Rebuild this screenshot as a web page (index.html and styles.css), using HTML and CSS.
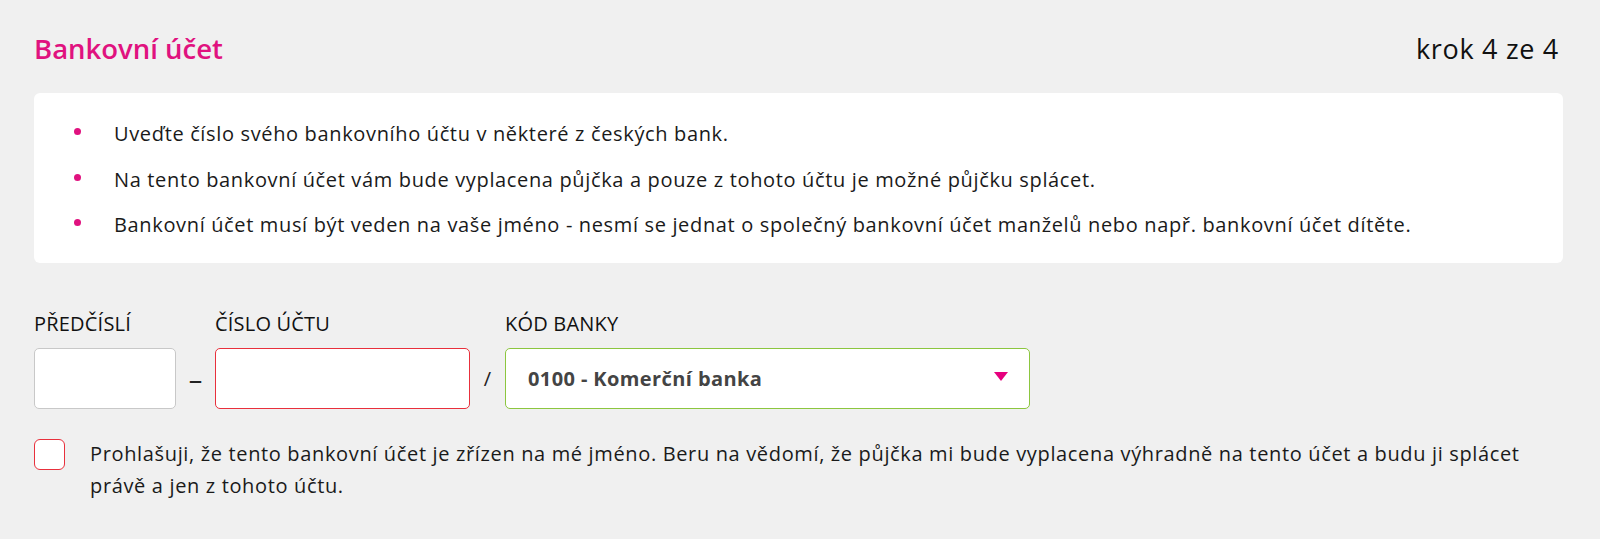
FILE: index.html
```html
<!DOCTYPE html>
<html lang="cs">
<head>
    <meta charset="UTF-8">
    <title>Bankovní účet</title>
    <link rel="stylesheet" href="styles.css">
</head>
<body>

<div class="container">
    <header class="step-header">
        <h1>Bankovní účet</h1>
        <span class="step">krok 4 ze 4</span>
    </header>

    <div class="info-box">
        <ul>
            <li>Uveďte číslo svého bankovního účtu v některé z českých bank.</li>
            <li>Na tento bankovní účet vám bude vyplacena půjčka a pouze z tohoto účtu je možné půjčku splácet.</li>
            <li>Bankovní účet musí být veden na vaše jméno - nesmí se jednat o společný bankovní účet manželů nebo např. bankovní účet dítěte.</li>
        </ul>
    </div>

    <div class="account-row">
        <div class="field">
            <label for="prefix">PŘEDČÍSLÍ</label>
            <input type="text" id="prefix" class="input input-prefix">
        </div>
        <span class="sep sep-dash">–</span>
        <div class="field">
            <label for="number">ČÍSLO ÚČTU</label>
            <input type="text" id="number" class="input input-number invalid">
        </div>
        <span class="sep sep-slash">/</span>
        <div class="field">
            <label for="bank">KÓD BANKY</label>
            <div class="select valid" id="bank">
                <span>0100 - Komerční banka</span>
                <span class="arrow"></span>
            </div>
        </div>
    </div>

    <label class="consent">
        <span class="checkbox"></span>
        <span class="consent-text">Prohlašuji, že tento bankovní účet je zřízen na mé jméno. Beru na vědomí, že půjčka mi bude vyplacena výhradně na tento účet a budu ji splácet právě a jen z tohoto účtu.</span>
    </label>
</div>

</body>
</html>
```

FILE: styles.css
```css
* {
    margin: 0;
    padding: 0;
    box-sizing: border-box;
}

html, body {
    height: 100%;
    font-family: "Open Sans", sans-serif;
    background: #f0f0f0;
    color: #1a1a1a;
}

.container {
    width: 1529px;
    margin-left: 34px;
    padding-top: 31px;
}

.step-header {
    display: flex;
    justify-content: space-between;
    align-items: baseline;
    padding-right: 4px;
    height: 62px;
}

.step-header h1 {
    font-size: 27.5px;
    line-height: 36px;
    font-weight: 600;
    color: #e0127f;
}

.step {
    font-size: 27px;
    line-height: 36px;
    letter-spacing: 0.7px;
    color: #111;
}

.info-box {
    background: #fff;
    border-radius: 6px;
    padding: 18px 40px 15px 40px;
}

.info-box ul {
    list-style: none;
}

.info-box li {
    position: relative;
    padding-left: 40px;
    font-size: 20px;
    letter-spacing: 0.65px;
    line-height: 45.5px;
}

.info-box li::before {
    content: "";
    position: absolute;
    left: 0;
    top: 17px;
    width: 7px;
    height: 7px;
    border-radius: 50%;
    background: #e0127f;
}

.account-row {
    display: flex;
    align-items: flex-end;
    margin-top: 49px;
}

.field label {
    display: block;
    font-size: 20px;
    line-height: 24px;
    letter-spacing: 0.2px;
    margin-bottom: 12px;
    color: #111;
}

.input,
.select {
    height: 61px;
    background: #fff;
    border: 1px solid #c8c8c8;
    border-radius: 5px;
    outline: none;
}

.input-prefix {
    width: 142px;
}

.input-number {
    width: 255px;
}

.invalid {
    border-color: #e8303c;
}

.valid {
    border-color: #8cc63f;
}

.sep {
    text-align: center;
    font-size: 20px;
    line-height: 61px;
    color: #222;
}

.sep-dash {
    width: 39px;
    font-size: 27px;
    padding-top: 1px;
}

.sep-slash {
    width: 35px;
}

.select {
    width: 525px;
    display: flex;
    align-items: center;
    justify-content: space-between;
    padding: 0 21px 0 22px;
    font-size: 20px;
    letter-spacing: 0.4px;
    font-weight: 700;
    color: #444;
}

.select .arrow {
    width: 0;
    height: 0;
    margin-top: -3px;
    border-left: 7px solid transparent;
    border-right: 7px solid transparent;
    border-top: 9px solid #e6007e;
}

.consent {
    display: flex;
    align-items: flex-start;
    margin-top: 30px;
}

.checkbox {
    flex: none;
    width: 31px;
    height: 31px;
    background: #fff;
    border: 1px solid #e8303c;
    border-radius: 6px;
}

.consent-text {
    margin-left: 25px;
    font-size: 20px;
    letter-spacing: 0.65px;
    line-height: 32.5px;
    margin-top: -1px;
}
```
